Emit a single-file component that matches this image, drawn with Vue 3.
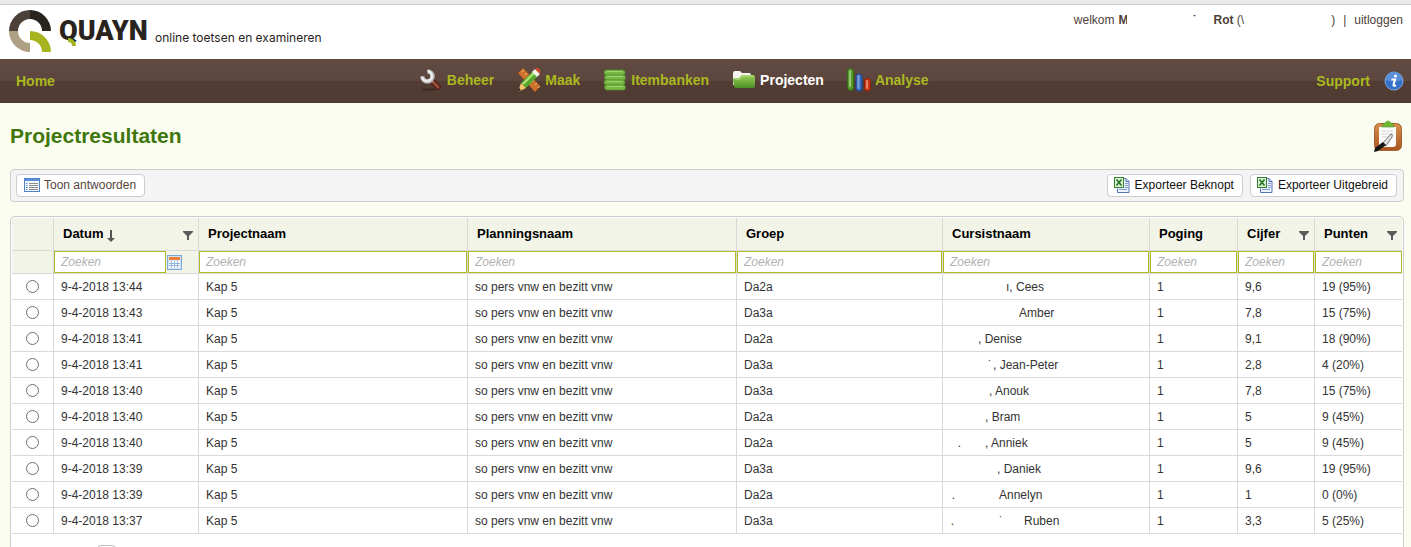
<script setup>
import { ref } from 'vue'

const columns = [
  { key: 'datum', label: 'Datum', width: 145, sorted: true, filter: true, calendar: true },
  { key: 'project', label: 'Projectnaam', width: 269 },
  { key: 'planning', label: 'Planningsnaam', width: 269 },
  { key: 'groep', label: 'Groep', width: 206 },
  { key: 'cursist', label: 'Cursistnaam', width: 207 },
  { key: 'poging', label: 'Poging', width: 88 },
  { key: 'cijfer', label: 'Cijfer', width: 77, filter: true },
  { key: 'punten', label: 'Punten', width: 87, filter: true }
]

const row = (datum, groep, lead, naam, cijfer, punten) => ({
  datum, groep, lead, naam, cijfer, punten,
  project: 'Kap 5', planning: 'so pers vnw en bezitt vnw', poging: '1'
})

// lead: [width, mark] pairs for the hidden surname in front of the first name
const rows = [
  row('9-4-2018 13:44', 'Da2a', [[56, '']], 'ı, Cees', '9,6', '19 (95%)'),
  row('9-4-2018 13:43', 'Da3a', [[69, '']], 'Amber', '7,8', '15 (75%)'),
  row('9-4-2018 13:41', 'Da2a', [[28, '']], ', Denise', '9,1', '18 (90%)'),
  row('9-4-2018 13:41', 'Da3a', [[42, '˙'], [1, '']], ', Jean-Peter', '2,8', '4 (20%)'),
  row('9-4-2018 13:40', 'Da3a', [[39, '']], ', Anouk', '7,8', '15 (75%)'),
  row('9-4-2018 13:40', 'Da2a', [[35, '']], ', Bram', '5', '9 (45%)'),
  row('9-4-2018 13:40', 'Da2a', [[11, '.'], [24, '']], ', Anniek', '5', '9 (45%)'),
  row('9-4-2018 13:39', 'Da3a', [[47, '']], ', Daniek', '9,6', '19 (95%)'),
  row('9-4-2018 13:39', 'Da2a', [[5, '.'], [44, '']], 'Annelyn', '1', '0 (0%)'),
  row('9-4-2018 13:37', 'Da3a', [[4, '.'], [49, '˙'], [21, '']], 'Ruben', '3,3', '5 (25%)')
]

const selected = ref(null)
const filters = ref({})
</script>

<template>
  <div class="page">
    <header class="top">
      <a class="brand" href="#">
        <svg class="emblem" viewBox="0 0 42 42" aria-hidden="true">
          <path d="M0 21A21 21 0 0 1 21 0V9A12 12 0 0 0 9 21Z" fill="#4c4039" />
          <path d="M21 0A21 21 0 0 1 42 21H33A12 12 0 0 0 21 9Z" fill="#29231e" />
          <path d="M0 21A21 21 0 0 0 21 42V33A12 12 0 0 1 9 21Z" fill="#ada084" />
          <path d="M21 21A21 21 0 0 1 42 42H33A12 12 0 0 0 21 30Z" fill="#a6b51f" />
        </svg>
        <span class="wordmark">QUAYN
          <svg class="tail" viewBox="0 0 8 8" aria-hidden="true"><path d="M0 0A8 8 0 0 1 8 8H4A4 4 0 0 0 0 4Z" fill="#a6b51f" /></svg>
        </span>
        <span class="tagline">online toetsen en examineren</span>
      </a>
      <div class="user">
        <span>welkom</span>
        <b class="first">M</b>
        <b class="middle">˙</b>
        <span class="last"><b>Rot</b> (\</span>
        <span class="close">)</span>
        <span class="bar">|</span>
        <a href="#">uitloggen</a>
      </div>
    </header>

    <nav class="nav">
      <a class="home" href="#">Home</a>
      <div class="menu">
        <a href="#">
          <svg viewBox="0 0 24 24" aria-hidden="true">
            <ellipse cx="11" cy="21.500" rx="9" ry="1" fill="#3c2923" />
            <path d="M11 11l4 4" stroke="#d4d4d4" stroke-width="4" />
            <path d="M14 14l5 5" stroke="#5a1d16" stroke-width="6" stroke-linecap="round" />
            <path d="M14 14l5 5" stroke="#94503f" stroke-width="3" stroke-linecap="round" />
            <path d="M8.500 3.500A5 5 0 1 1 3.500 8.500" fill="none" stroke="#b5b5b5" stroke-width="4.500" />
            <path d="M8.500 3A5 5 0 1 1 3 8.500" fill="none" stroke="#ececec" stroke-width="2.500" />
          </svg>Beheer</a>
        <a href="#">
          <svg viewBox="0 0 24 24" aria-hidden="true">
            <path d="M1 5l5-5 17 18-5 6z" fill="#cd722d" stroke="#9c4f1c" stroke-width=".6" />
            <path d="M7 2l-2 2m5 1L8 7m5 1l-2 2m6 2l-2 2m5 1l-2 2m5 1l-2 2" stroke="#f4b777" />
            <path d="M4 15L16 3l5 5L9 20z" fill="#55a82b" /><path d="M6 16L18 4" stroke="#b6e77e" stroke-width="2" />
            <path d="M15 4l3-3 5 5-3 3z" fill="#f1f1ee" /><path d="M18 1q2-2 4 0t1 5z" fill="#d84a25" />
            <path d="M4 15l5 5-8 4z" fill="#f7c768" /><path d="M2 20l2 2-3 2z" fill="#222" />
          </svg>Maak</a>
        <a href="#">
          <svg viewBox="0 0 24 24" aria-hidden="true">
            <g fill="#79b943" stroke="#4f982d" stroke-width=".7">
              <rect x="1" y="2" width="21" height="5" rx="2.4" /><rect x="1.500" y="7" width="21" height="5" rx="2.4" />
              <rect x="1" y="12" width="21" height="5" rx="2.4" /><rect x="1.500" y="17" width="21" height="5" rx="2.4" />
            </g>
            <path d="M4 3.500h15M4 8.500h16M4 13.500h15M4 18.500h16" stroke="#a2d273" stroke-width="1" />
          </svg>Itembanken</a>
        <a href="#" class="active">
          <svg viewBox="0 0 24 24" aria-hidden="true">
            <defs><linearGradient id="folder" x2="0" y2="1"><stop stop-color="#9bd05c" /><stop offset="1" stop-color="#4d8f24" /></linearGradient></defs>
            <path d="M1 5q0-2 2-2h5l2 2h7q2 0 2 2v10H1z" fill="#f4f4ef" />
            <path d="M1 12q0-2 2-2h4l3-3h11q2 0 2 2v9q0 2-2 2H4q-2 0-2-2z" fill="url(#folder)" />
            <path d="M3 11h5l3-3h10" fill="none" stroke="#c4e594" stroke-width=".8" />
          </svg>Projecten</a>
        <a href="#">
          <svg viewBox="0 0 24 24" aria-hidden="true">
            <rect x=".5" y=".5" width="6" height="22" rx="3" fill="#559a27" stroke="#316d13" />
            <rect x="9" y="6" width="6" height="17" rx="2.500" fill="#316ac0" stroke="#204789" />
            <rect x="17.500" y="10.500" width="6" height="12.500" rx="2.500" fill="#cd3512" stroke="#8e210b" />
            <path d="M3 3v15M11.500 8v12M20 13v7" stroke="#fff" stroke-opacity=".4" stroke-width="2" stroke-linecap="round" />
          </svg>Analyse</a>
      </div>
      <a class="support" href="#">Support
        <svg viewBox="0 0 20 20" aria-hidden="true">
          <circle cx="10" cy="10" r="9" fill="#3470c6" stroke="#7daee7" />
          <path d="M2 9a8 8 0 0 1 16 0q-8 3-16 0z" fill="#5b90d8" />
          <circle cx="11.500" cy="5" r="1.500" fill="#fff" />
          <path d="M7.500 8.500h3.500L9.500 14q-.2 1.500 2.500 .3" fill="none" stroke="#fff" stroke-width="2" />
        </svg>
      </a>
    </nav>

    <main>
      <div class="heading">
        <h1>Projectresultaten</h1>
        <svg viewBox="0 0 30 33" aria-hidden="true">
          <defs><linearGradient id="board" x2="0" y2="1"><stop stop-color="#d8904e" /><stop offset="1" stop-color="#a7561f" /></linearGradient></defs>
          <rect x="1.500" y="3.500" width="27" height="27" rx="5" fill="url(#board)" stroke="#a4602e" />
          <path d="M6 7h17v17q0 3-3 3H9q-3 0-3-3z" fill="#fafafa" />
          <path d="M9 11h11M9 14h11M9 17h7" stroke="#d6d6d6" />
          <path d="M9 7q0-3 3-4 3-4 6 0 3 1 3 4z" fill="#72b735" stroke="#549323" stroke-width=".6" />
          <path d="M18 14l-8 9 3 3 6-9q1-3-1-3z" fill="#e3e3e3" stroke="#666" stroke-width=".9" />
          <path d="M10 22l3 3-8 6-4 1 1-4z" fill="#151515" />
        </svg>
      </div>

      <div class="toolbar">
        <button type="button" class="show">
          <svg viewBox="0 0 16 16" aria-hidden="true">
            <rect x=".5" y="1.500" width="15" height="13" fill="#f4f8fd" stroke="#5383c5" /><path d="M1 3h14" stroke="#5c90d6" stroke-width="2" />
            <path d="M5 6.500h9M5 8.500h9M5 10.500h9M5 12.500h9" stroke="#8c8c8c" /><path d="M2 6.500h1.500M2 8.500h1.500M2 10.500h1.500M2 12.500h1.500" stroke="#4c92db" />
          </svg>Toon antwoorden
        </button>
        <span class="spacer"></span>
        <button v-for="label in ['Exporteer Beknopt', 'Exporteer Uitgebreid']" :key="label" type="button">
          <svg viewBox="0 0 16 16" aria-hidden="true">
            <path d="M5 1.500h7l3 3v11H3.500v-4" fill="#edf3ff" stroke="#5473b4" />
            <path d="M12 1.500v3h3" fill="#cedbf5" stroke="#5473b4" />
            <path d="M11 6.500h3M11 8.500h3M5 12.500h8M11 10.500h3" stroke="#809bd1" />
            <rect x=".5" y=".5" width="9" height="10" fill="#dcefd8" stroke="#32802d" />
            <path d="M2.500 2.500l5 6M7.500 2.500l-5 6" stroke="#247821" stroke-width="1.700" />
          </svg>{{ label }}
        </button>
      </div>

      <div class="panel">
        <table>
          <colgroup>
            <col width="42">
            <col v-for="c in columns" :key="c.key" :width="c.width">
          </colgroup>
          <thead>
            <tr class="titles">
              <th></th>
              <th v-for="c in columns" :key="c.key" scope="col">
                <div class="title">
                  <span>{{ c.label }}</span>
                  <svg v-if="c.sorted" class="sort" viewBox="0 0 8 13" aria-hidden="true"><path d="M3 0h2v8h3l-4 4-4-4h3z" fill="#555" /></svg>
                  <svg v-if="c.filter" class="funnel" viewBox="0 0 10 9" aria-hidden="true"><path d="M0 0h10v1L6 5v4H4V5L0 1z" fill="#5c5c5c" /></svg>
                </div>
              </th>
            </tr>
            <tr class="search">
              <td></td>
              <td v-for="c in columns" :key="c.key">
                <div class="field">
                  <input v-model="filters[c.key]" type="text" placeholder="Zoeken" :aria-label="c.label">
                  <button v-if="c.calendar" type="button" aria-label="Kies datum">
                    <svg viewBox="0 0 15 15" aria-hidden="true">
                      <rect x=".5" y=".5" width="14" height="14" fill="#d5e5f9" stroke="#7ca5da" />
                      <rect x="2" y="2" width="11" height="3" fill="#f07e38" />
                      <rect x="2" y="6" width="11" height="7" fill="#fff" />
                      <path d="M2 8.500h11M2 10.500h11M4.500 6v7M7.500 6v7M10.500 6v7" stroke="#94b4e0" />
                    </svg>
                  </button>
                </div>
              </td>
            </tr>
          </thead>
          <tbody>
            <tr v-for="(r, i) in rows" :key="i">
              <td class="pick"><input v-model="selected" type="radio" name="resultaat" :value="i" :aria-label="r.datum"></td>
              <td v-for="c in columns" :key="c.key">
                <template v-if="c.key === 'cursist'"><span v-for="(p, n) in r.lead" :key="n" class="lead" :style="{ width: p[0] + 'px' }">{{ p[1] }}</span>{{ r.naam }}</template>
                <template v-else>{{ r[c.key] }}</template>
              </td>
            </tr>
          </tbody>
        </table>
        <div class="pager"><button type="button" aria-label="Pagina"></button></div>
      </div>
    </main>
  </div>
</template>

<style>
html { scrollbar-width: none; }
body { margin: 0; background: #fafdf0; }
</style>

<style scoped>
.page { font: 12px/16px "Liberation Sans", Arial, sans-serif; color: #333; }
* { box-sizing: border-box; }
a { color: inherit; text-decoration: none; }
svg { display: block; flex: none; }
button, input { font: inherit; margin: 0; }

.top { display: flex; justify-content: space-between; align-items: flex-start; height: 59px; padding: 5px 8px 0 9px; background: #fff linear-gradient(#e9e9e9 4px, #c9c9c9 4px, #c9c9c9 5px, #fff 5px); }
.brand { display: flex; padding-top: 5px; }
.emblem { width: 42px; height: 42px; }
.wordmark { position: relative; margin-left: 8px; width: 88px; font: 900 27px/42px Roboto, sans-serif; color: #29231e; white-space: nowrap; }
.tail { position: absolute; left: 9px; top: 28px; width: 8px; height: 8px; }
.tagline { margin: 20px 0 0 8px; font-family: Inter, sans-serif; color: #29231e; }
.user { display: flex; padding-top: 7px; color: #4c4039; }
.first { width: 9px; margin-left: 4px; overflow: hidden; }
.middle { width: 4px; margin-left: 65px; }
.last { margin-left: 17px; }
.close { margin-left: 87px; }
.bar { margin: 0 8px; }

.nav { display: flex; align-items: center; height: 44px; padding: 0 7px 0 16px; background: linear-gradient(#604a41, #5c463d 22px, #523c34 22px, #503b33); color: #abb91f; font-size: 14px; font-weight: bold; }
.menu { display: flex; gap: 23px; margin-left: 26%; padding: 0 0 2px 3px; }
.menu a { display: flex; align-items: center; gap: 4px; }
.menu svg { width: 24px; height: 24px; }
.menu .active { color: #fff; }
.support { display: flex; align-items: center; gap: 14px; margin-left: auto; }
.support svg { width: 20px; height: 20px; }

main { padding: 0 7px 0 10px; }
.heading { display: flex; justify-content: space-between; align-items: center; height: 66px; }
h1 { margin: 0; font-size: 21px; line-height: 24px; color: #3f770c; }
.heading svg { width: 30px; height: 33px; margin-right: 1px; }

.toolbar { display: flex; gap: 7px; padding: 4px 6px 4px 5px; border: 1px solid #ccc; border-radius: 4px; background: #f4f4f4; }
.toolbar button { display: flex; align-items: center; gap: 5px; height: 23px; padding: 0 8px 1px 6px; border: 1px solid #ccc; border-radius: 4px; background: #fff; color: #111; white-space: nowrap; }
.toolbar .show { gap: 4px; padding-left: 7px; color: #55443a; }
.toolbar svg { width: 16px; height: 16px; }
.spacer { flex: 1; }

.panel { margin-top: 14px; padding: 1px 1px 0; border: 1px solid #ccc; border-radius: 5px 5px 0 0; background: #fff; }
table { width: 100%; table-layout: fixed; border-collapse: separate; border-spacing: 0; }
th, td { padding: 0 0 0 7px; border-right: 1px solid #d9d9d9; border-bottom: 1px solid #d9d9d9; text-align: left; white-space: nowrap; }
tbody td { height: 26px; color: #333; }
th:last-child, td:last-child { border-right: 0; }
thead { background: #f2f4e8; }
th { height: 33px; padding: 0 5px 0 9px; font-size: 13px; color: #000; }
.title { display: flex; align-items: center; }
.sort { width: 8px; height: 13px; margin: 4px 0 0 4px; }
.funnel { width: 10px; height: 9px; margin: 3px 0 0 auto; }
.search td { height: 23px; padding: 0; }
.field { display: flex; align-items: center; }
.field input { flex: 1; min-width: 0; width: 100%; height: 22px; padding: 0 6px; border: 1px solid #b0bb25; background: #fff; color: #333; }
.field input::placeholder { color: #b2b2b2; font-style: italic; opacity: 1; }
.field button { margin: 0 16px 0 1px; padding: 0; border: 0; background: none; }
.field svg { width: 15px; height: 15px; }
.pick { padding: 0; }
.pick input { display: block; appearance: none; width: 13px; height: 13px; margin: 0 auto; border: 1px solid #707070; border-radius: 50%; background: #fff; }
.pick input:checked { background: #555; box-shadow: inset 0 0 0 3px #fff; }
.lead { display: inline-block; height: 16px; vertical-align: top; text-align: right; }
.pager { padding: 11px 0 12px 85px; }
.pager button { display: block; width: 19px; height: 19px; border: 1px solid #bbb; border-radius: 4px; background: #fff; }
</style>
